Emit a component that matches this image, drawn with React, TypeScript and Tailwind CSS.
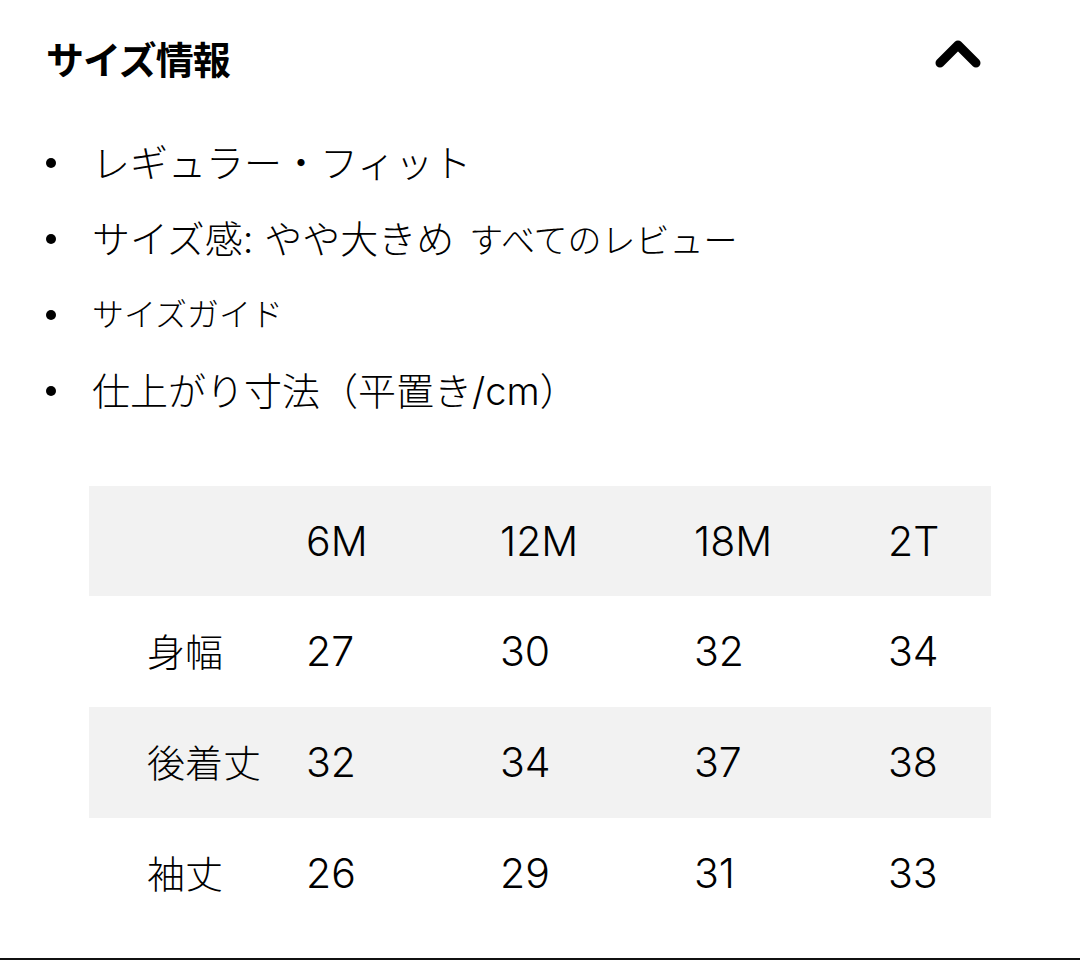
import React from "react";

const rows = [
  { label: "身幅", v: ["27", "30", "32", "34"] },
  { label: "後着丈", v: ["32", "34", "37", "38"] },
  { label: "袖丈", v: ["26", "29", "31", "33"] },
];

const font = { fontFamily: '"Inter", "Noto Sans CJK JP", sans-serif' };

function Bullet() {
  return <span className="w-[10px] h-[10px] rounded-full bg-black ml-[46px] mr-[36px] shrink-0" />;
}

export default function App() {
  return (
    <div className="w-[1080px] h-[960px] bg-white text-black flex flex-col" style={font}>
      <div className="flex items-center justify-between pl-[46px] pr-[98px] pt-[36px] h-[84px]">
        <h2 className="text-[38px] font-bold leading-none tracking-[-1px]">サイズ情報</h2>
        <svg width="48" height="34" viewBox="0 0 48 34" className="mt-[-12px]">
          <path d="M6 26 L24 8 L42 26" fill="none" stroke="#000" strokeWidth="9" strokeLinecap="round" strokeLinejoin="round" />
        </svg>
      </div>
      <ul className="mt-[59px] flex flex-col gap-[36px]">
        <li className="flex items-center h-[40px]">
          <Bullet />
          <span className="text-[38px] leading-none font-light">レギュラー・フィット</span>
        </li>
        <li className="flex items-center h-[40px]">
          <Bullet />
          <span className="text-[38px] leading-none font-light">サイズ感: やや大きめ</span>
          <span className="text-[34px] leading-none font-light ml-[15px] mt-[4px]">すべてのレビュー</span>
        </li>
        <li className="flex items-center h-[40px]">
          <Bullet />
          <span className="text-[32px] leading-none font-light">サイズガイド</span>
        </li>
        <li className="flex items-center h-[40px]">
          <Bullet />
          <span className="text-[38px] leading-none font-light">仕上がり寸法（平置き/cm）</span>
        </li>
      </ul>
      <div className="mt-[75px] ml-[89px] w-[902px] flex flex-col text-[41px] leading-none font-light">
        <div className="grid grid-cols-[217px_194px_194px_194px_1fr] items-center h-[110px] bg-[#f2f2f2]">
          <div />
          <div>6M</div>
          <div>12M</div>
          <div>18M</div>
          <div>2T</div>
        </div>
        {rows.map((r, i) => (
          <div
            key={r.label}
            className={`grid grid-cols-[217px_194px_194px_194px_1fr] items-center h-[111px] ${i % 2 === 1 ? "bg-[#f2f2f2]" : "bg-white"}`}
          >
            <div className="pl-[58px] text-[38px] font-light">{r.label}</div>
            {r.v.map((x, j) => (
              <div key={j}>{x}</div>
            ))}
          </div>
        ))}
      </div>
      <div className="mt-auto h-[2px] bg-[#111]" />
    </div>
  );
}
